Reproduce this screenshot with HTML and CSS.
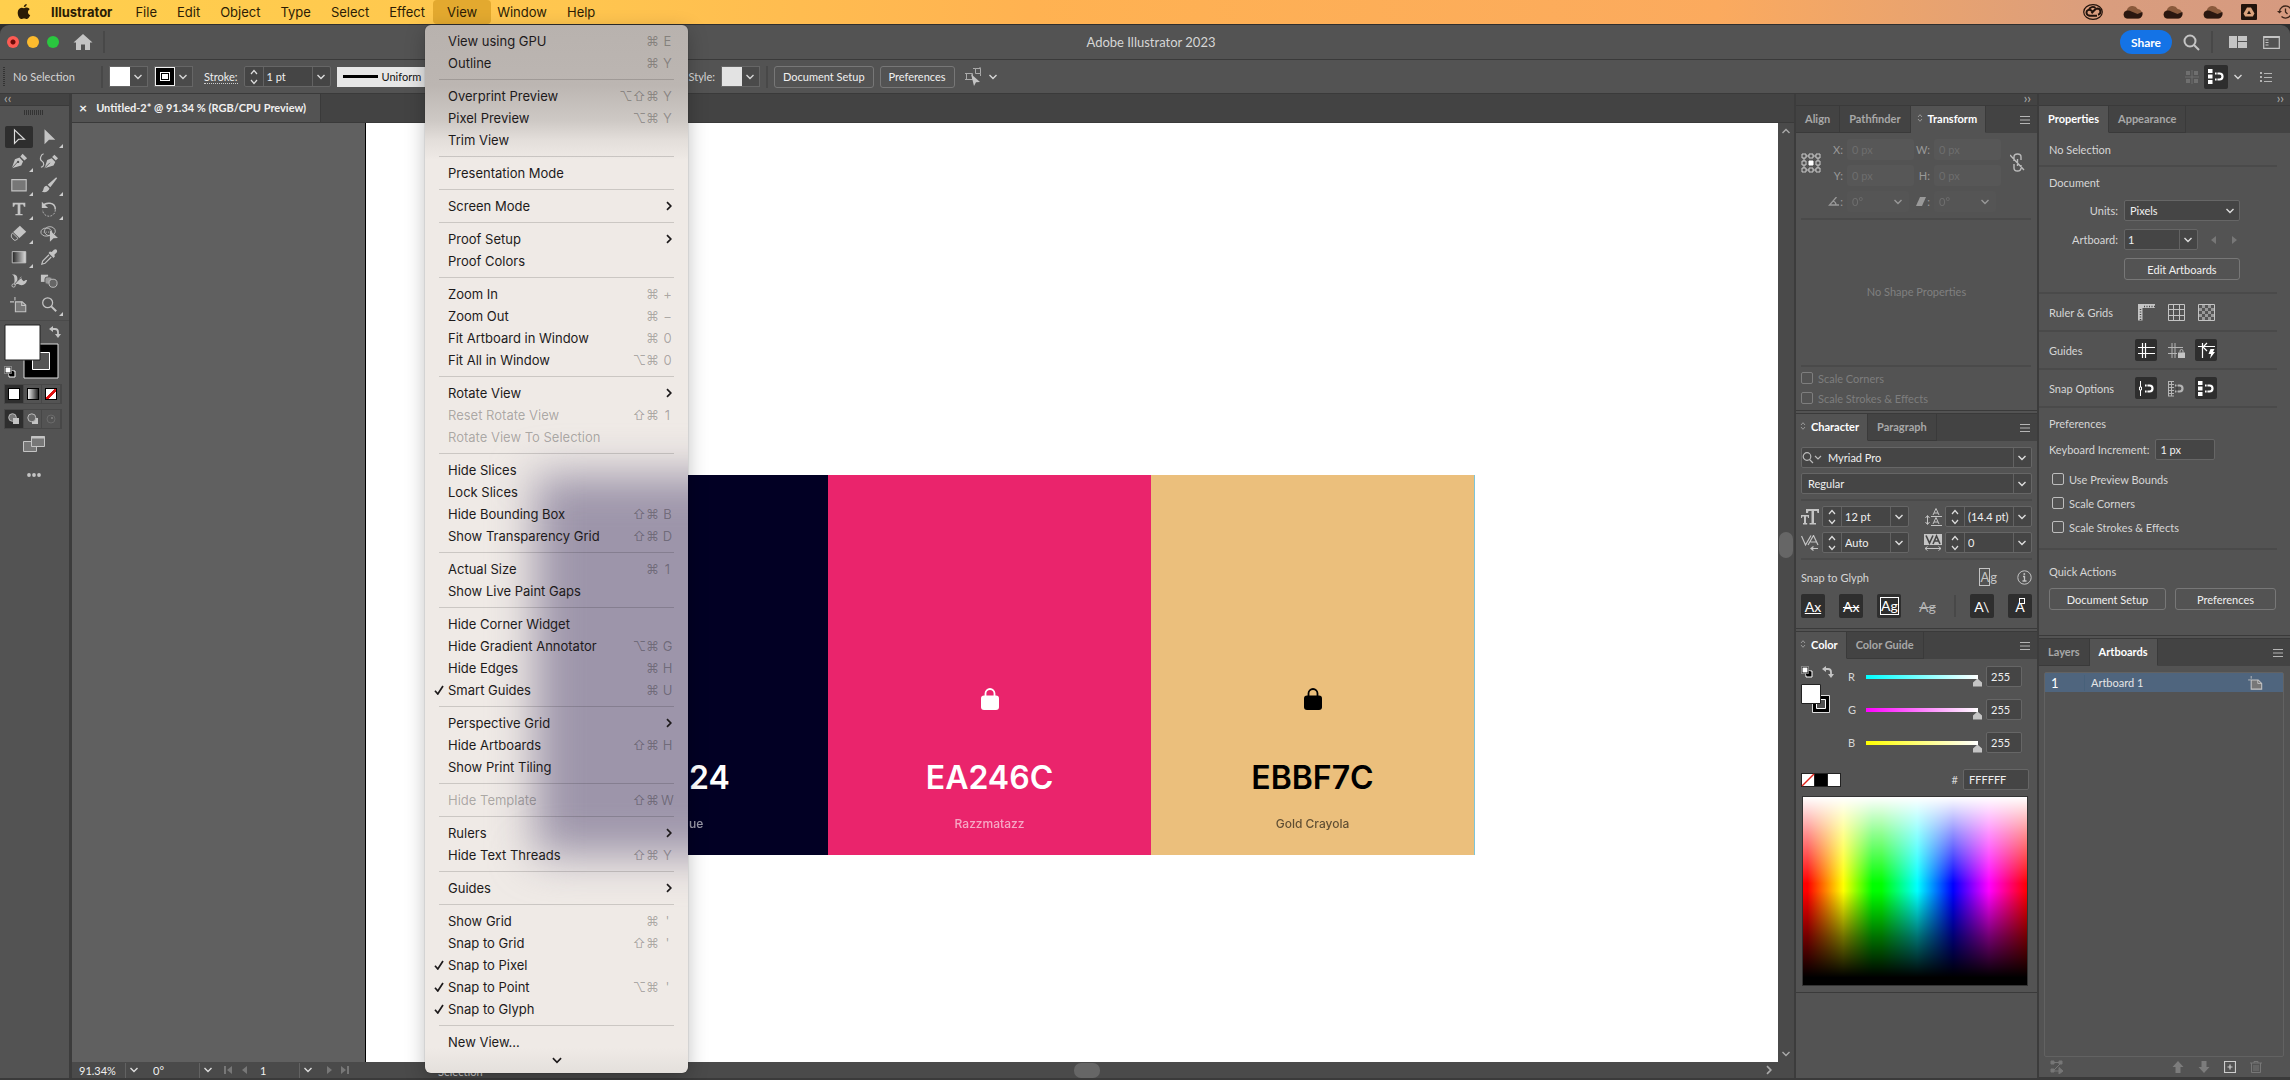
FILE: index.html
```html
<!DOCTYPE html>
<html lang="en">
<head>
    <meta charset="UTF-8">
    <meta name="viewport" content="width=device-width, initial-scale=1.0">
    <title>Adobe Illustrator 2023</title>
    <link rel="stylesheet" href="styles.css">
</head>
<body>
    <!-- Shared icons -->
    <svg class="sprite" aria-hidden="true">
        <symbol id="i-cloud" viewBox="0 0 20 14">
            <path d="M4.500 13.500a4 4 0 0 1-.8-7.900 6 6 0 0 1 11-1.600 4.800 4.800 0 0 1 .3 9.500z" fill="#8a5a3c"/>
            <path d="M4.500 13.500a4 4 0 0 1-1-7.800c2-.6 3.500 0 5 .8l6 2.500 4.800-2c1 3-.8 6.500-4.300 6.500z" fill="#2a1710"/>
        </symbol>
        <symbol id="i-menu" viewBox="0 0 10 8"><path d="M0 .5h10M0 4h10M0 7.500h10" stroke="#b5b5b5"/></symbol>
        <symbol id="i-sort" viewBox="0 0 6 8"><path d="M1 3l2-2.300L5 3M1 5l2 2.300L5 5" fill="none" stroke="#999"/></symbol>
        <symbol id="i-steps" viewBox="0 0 8 16"><path d="M1 5l3-3.500L7 5M1 11l3 3.500L7 11" fill="none" stroke="#ddd" stroke-width="1.200"/></symbol>
        <symbol id="i-down" viewBox="0 0 10 6"><path d="M1.500 1L5 4.500 8.500 1" fill="none" stroke="currentColor" stroke-width="1.400"/></symbol>
        <symbol id="i-check" viewBox="0 0 10 10"><path d="M1 5.800L3.800 9 9 1" fill="none" stroke="currentColor" stroke-width="1.700"/></symbol>
        <symbol id="i-right" viewBox="0 0 6 10"><path d="M1 1.200L4.800 5 1 8.800" fill="none" stroke="currentColor" stroke-width="1.700"/></symbol>
        <symbol id="i-swap" viewBox="0 0 12 12"><path d="M3.500 3h2.500q3 0 3 3v2.500" fill="none" stroke="#c4c4c4" stroke-width="1.800"/><path d="M4 0v6L0 3zM6 8h6l-3 4z" fill="#c4c4c4"/></symbol>
        <symbol id="i-default" viewBox="0 0 12 12"><path d="M5 5h6v6H5z" stroke="#fff" fill="#000"/><path d="M5 5h4.500v4.500H5z" fill="#000"/><path d="M1 1h6v6H1z" fill="#fff" stroke="#111"/><path d="M.5.5h7v7h-7z" fill="none" stroke="#bbb" stroke-width=".6"/></symbol>
        <symbol id="i-magnet" viewBox="0 0 17 17"><path d="M8 5.500h4.500a3 3 0 0 1 0 6H8" fill="none" stroke="currentColor" stroke-width="2.200"/><path d="M10 4v9" stroke="#2e2e2e" stroke-width=".8"/></symbol>
        <symbol id="i-tiles" viewBox="0 0 6 17"><path d="M0 1h4.500v4H0zM0 6.500h4.500v4H0zM0 12h4.500v4H0z" fill="currentColor"/></symbol>
        <symbol id="i-lock" viewBox="0 0 18 22"><path d="M4.500 9V5.500a4.500 4.500 0 0 1 9 0V9" fill="none" stroke="currentColor" stroke-width="1.800"/><rect y="7.500" width="18" height="14.500" rx="3" fill="currentColor"/></symbol>
        <symbol id="i-page" viewBox="0 0 18 16"><path d="M3.500 4.500h8l4 4v6.500h-12z" fill="#777" stroke="#c4c4c4" stroke-width="1.200"/><path d="M11 4.500v4h4.500M0 4.500h3M3.500 0v3" fill="none" stroke="#c4c4c4"/></symbol>
    </svg>

    <header class="menubar">
        <svg class="apple" viewBox="0 0 14 17"><path d="M9.900 0c.1 1.800-1.400 3.400-3.100 3.300C6.600 1.700 8.200.2 9.900 0zM7 4.500c.8 0 1.700-.8 3.100-.7 1.200.1 2.300.7 2.900 1.700-2.700 1.600-2.200 5.200.6 6.300-.6 1.600-1.900 4.200-3.500 4.200-1.200 0-1.600-.7-3-.7s-1.900.7-3 .7C2.200 16 .3 12.500.3 9.400c0-3.200 2-5.200 4-5.300C5.500 4 6.400 4.500 7 4.500z"/></svg>
        <nav class="app-menus">
            <button class="app-name">Illustrator</button>
            <button>File</button>
            <button>Edit</button>
            <button>Object</button>
            <button>Type</button>
            <button>Select</button>
            <button>Effect</button>
            <button class="open" aria-haspopup="menu">View</button>
            <button>Window</button>
            <button>Help</button>
        </nav>
        <div class="tray">
            <svg width="20" height="16" viewBox="0 0 20 16" fill="none" stroke="#21130c"><ellipse cx="10" cy="8" rx="9.300" ry="7.300" stroke-width="1.200"/><path d="M15 10.800a3.200 3.200 0 0 0-.5-6.300c-1.600 0-2.300.9-3.200 1.800L8.500 9.200M5.500 11.800h8.500M9.500 7.500L8 6.300C6 5 3.500 6.200 3.500 8.500s2 3.300 3.500 3" stroke-width="2"/><path d="M6 5.500a4 4 0 0 1 6.500-1.500" stroke-width="1.800"/></svg>
            <svg width="20" height="14"><use href="#i-cloud"/></svg>
            <svg width="20" height="14"><use href="#i-cloud"/></svg>
            <svg width="20" height="14"><use href="#i-cloud"/></svg>
            <svg class="tray-drive" width="16" height="16" viewBox="0 0 16 16"><rect width="16" height="16" rx="1" fill="#21130c"/><path d="M6 3.500h4l3.500 6-1.700 3H4.200l-1.700-3z" fill="#dba27c"/><path d="M8 6.500L10 10H6z" fill="#21130c"/></svg>
            <svg class="tray-clock" width="16" height="14" viewBox="0 0 16 14" fill="none" stroke="#3b2418" stroke-width="1.300"><path d="M2.500 7a6 6 0 1 1 2 4.500M8.500 3.500V7l2 2"/><path d="M0 6l2.500 2.500L5 6z" fill="#3b2418" stroke="none"/></svg>
        </div>
    </header>

    <div class="window">
        <div class="titlebar">
            <div class="title-left">
                <span class="light red"></span>
                <span class="light yellow"></span>
                <span class="light green"></span>
                <svg class="home" width="20" height="16" viewBox="0 0 20 16"><path d="M10 0l9.500 8.500H17V16h-5v-5.500H8V16H3V8.500H.5z" fill="#c4c4c4"/></svg>
                <span class="bar"></span>
            </div>
            <h1>Adobe Illustrator 2023</h1>
            <div class="title-right">
                <button class="share">Share</button>
                <svg width="17" height="17" viewBox="0 0 17 17" fill="none" stroke="#c4c4c4" stroke-width="2"><circle cx="7" cy="7" r="5.500"/><path d="M11 11l5 5"/></svg>
                <span class="bar"></span>
                <svg width="18" height="12" viewBox="0 0 18 12" fill="#c4c4c4"><path d="M0 0h8v12H0zM9 0h9v5H9zM9 6h9v6H9z"/></svg>
                <svg width="17" height="13" viewBox="0 0 17 13" fill="none" stroke="#c4c4c4"><path d="M.7.7h15.600v11.600H.7z" stroke-width="1.200"/><path d="M.5 1.500h16M2.500 4h3M2.500 6.500h3M2.500 9h3" /></svg>
            </div>
        </div>

        <div class="controlbar">
            <span class="grip"></span>
            <span class="selection-state">No Selection</span>
            <span class="bar"></span>
            <button class="chip" aria-label="Fill"><span class="chip-fill white"></span><svg width="10" height="6"><use href="#i-down"/></svg></button>
            <button class="chip" aria-label="Stroke color"><span class="chip-fill ring"></span><svg width="10" height="6"><use href="#i-down"/></svg></button>
            <label class="dotted" for="stroke">Stroke:</label>
            <span class="stepper stroke-stepper">
                <svg width="8" height="16"><use href="#i-steps"/></svg>
                <select id="stroke"><option>1 pt</option></select>
            </span>
            <button class="profile"><span class="line"></span>Uniform</button>
            <div class="style-group">
                <span>Style:</span>
                <button class="chip" aria-label="Graphic style"><span class="chip-fill light-gray"></span><svg width="10" height="6"><use href="#i-down"/></svg></button>
                <span class="bar"></span>
                <button class="btn">Document Setup</button>
                <button class="btn">Preferences</button>
                <svg width="17" height="20" viewBox="0 0 17 20" fill="none" stroke="#aaa"><path d="M1.500 6.500h6v6h-6zM10.500 1.500h5v5h-5zM0 6.500h2M0 12.500h2M15 0v2M8 1.500h2.500M15.500 6.500V9"/><path d="M6 7l9 8-4 .3L9 19z" fill="#c4c4c4" stroke="none"/></svg>
                <svg width="10" height="6"><use href="#i-down"/></svg>
            </div>
            <div class="control-right">
                <svg width="14" height="14" viewBox="0 0 14 14" fill="#6f6f6f"><path d="M1 1h4v4H1zM9 1h4v4H9zM1 9h4v4H1zM9 9h4v4H9zM0 6.500h14v1H0zM6.500 0h1v14h-1z"/></svg>
                <button class="tile on" aria-label="Snap to pixel"><svg width="6" height="17"><use href="#i-tiles"/></svg><svg class="mag" width="17" height="17"><use href="#i-magnet"/></svg></button>
                <svg width="10" height="6"><use href="#i-down"/></svg>
                <svg class="list-icon" width="12" height="10" viewBox="0 0 12 10" stroke="#b5b5b5"><path d="M0 1h2M0 5h2M0 9h2" stroke-width="2"/><path d="M4 1.500h8M4 5.500h8M4 9.500h8"/></svg>
            </div>
        </div>

        <div class="workspace">
            <!-- Tools -->
            <aside class="tools">
                <div class="strip">‹‹</div>
                <span class="tools-grip"></span>
                <div class="tool-grid">
                    <button class="tool on" aria-label="Selection"><svg viewBox="0 0 20 20"><path d="M5 2l11 10.500H9.500L5 17z" fill="none" stroke="#ddd" stroke-width="1.300"/></svg></button>
                    <button class="tool more" aria-label="Direct Selection"><svg viewBox="0 0 20 20"><path d="M5 1.500L17 13h-7l-5 5z"/></svg></button>
                    <button class="tool more" aria-label="Pen"><svg viewBox="0 0 20 20"><path d="M2 18l3.500-10 5-2 4 4.500-2 4.500zM11.500 5l2.500-3 5 5-3 2.500z"/><path d="M2 18l6.500-7" stroke="#535353"/><circle cx="9" cy="11" r="1.300" fill="#535353"/></svg></button>
                    <button class="tool" aria-label="Curvature"><svg viewBox="0 0 20 20"><path d="M5 18l3-9 5-2 4 4-2 4zM13.500 5.500L16 3l4 4-2.500 2.500z"/><path d="M5 18l6-6" stroke="#535353"/><path d="M1 17c4-1 4-5 1-7S1 3 4 2" fill="none" stroke="#c4c4c4" stroke-width="1.300"/></svg></button>
                    <button class="tool more" aria-label="Rectangle"><svg viewBox="0 0 20 20"><path d="M2 4h16v12.500H2z" fill="#777" stroke="#c4c4c4" stroke-width="1.200"/></svg></button>
                    <button class="tool more" aria-label="Paintbrush"><svg viewBox="0 0 20 20"><path d="M18 1.500l1 1-7.500 10-3-2.800zM7.500 10.800l3 2.800c-.5 3-4 5.500-8.500 4 2-1 1.500-2.500 2.300-4.500.6-1.500 1.800-2.200 3.200-2.300z"/></svg></button>
                    <button class="tool more" aria-label="Type"><svg viewBox="0 0 20 20"><path d="M3 3h14v4.500h-1.500L14.500 5h-3v10.500h2.500V17H6v-1.500h2.500V5h-3l-1 2.500H3z"/></svg></button>
                    <button class="tool more" aria-label="Rotate"><svg viewBox="0 0 20 20"><path d="M3 7C6 2 17 2 17 10.500" fill="none" stroke="#c4c4c4" stroke-width="1.600"/><path d="M17 11a7 7 0 0 1-14 0" fill="none" stroke="#c4c4c4" stroke-dasharray="2 1.500"/><path d="M2 2v7h7z"/></svg></button>
                    <button class="tool more" aria-label="Eraser"><svg viewBox="0 0 20 20"><path d="M11 2l7 6.500-7.500 7L3.500 9z"/><path d="M2.800 10L9 16l-2.500 2H4.500L1.500 14.500V12z" fill="none" stroke="#c4c4c4"/></svg></button>
                    <button class="tool" aria-label="Shape Builder"><svg viewBox="0 0 20 20"><g fill="none" stroke="#c4c4c4"><ellipse cx="7" cy="9" rx="6" ry="4.500"/><ellipse cx="11" cy="8" rx="6" ry="5"/><path d="M4 9h8" stroke-dasharray="1 1.500"/></g><path d="M11 7l9 8.500-5 .2-4 4z"/></svg></button>
                    <button class="tool more" aria-label="Gradient"><svg viewBox="0 0 20 20"><defs><linearGradient id="g1"><stop stop-color="#222"/><stop offset="1" stop-color="#ddd"/></linearGradient></defs><path d="M2.500 4h15v12.500h-15z" fill="url(#g1)" stroke="#c4c4c4"/></svg></button>
                    <button class="tool" aria-label="Eyedropper"><svg viewBox="0 0 20 20"><path d="M11 4l2 .5L15.500 2q2-1.500 3 0t0 3L16 7.500l.5 2L15 11l-5.500-5.500z"/><path d="M10 7.500L3 14.500 2 18l3.500-1 7-7" fill="none" stroke="#c4c4c4" stroke-width="1.300"/></svg></button>
                    <button class="tool" aria-label="Puppet Warp"><svg viewBox="0 0 20 20"><path d="M1 16c3 0 4-3 4-7S4 3 2 3c5-1 7 2 6 7 3-1 2-4 5-5-1 3 1 4 2 5s1-2 4-1c-1 5-5 7-9 5-3-2-4 2-9 2z"/><path d="M3 16L10 8l5-3" stroke="#535353" fill="none"/><circle cx="4" cy="15" r="1.800" fill="#535353" stroke="#c4c4c4"/></svg></button>
                    <button class="tool" aria-label="Blend"><svg viewBox="0 0 20 20"><path d="M1 3h8v8H1z"/><rect x="5.500" y="5.500" width="8" height="8" rx="2.500" fill="#999" stroke="#535353"/><circle cx="14.500" cy="12.500" r="4.500" fill="#666" stroke="#c4c4c4"/></svg></button>
                    <button class="tool" aria-label="Artboard"><svg viewBox="0 0 20 20"><path d="M6 6.500h7.500L17.500 10v7.500H6z" fill="#777" stroke="#c4c4c4" stroke-width="1.200"/><path d="M13 6.500v4h4.500M0 6.500h4.500M5.500 1v4" fill="none" stroke="#c4c4c4" stroke-width="1.200"/></svg></button>
                    <button class="tool more" aria-label="Zoom"><svg viewBox="0 0 20 20"><circle cx="8.500" cy="7.500" r="5.500" fill="none" stroke="#c4c4c4" stroke-width="1.400"/><path d="M12.500 11.500l5.500 5.500" stroke="#c4c4c4" stroke-width="2.200"/></svg></button>
                </div>
                <svg class="fill-stroke" width="60" height="56" viewBox="0 0 60 56">
                    <path d="M20 20h34v34H20z" fill="#000" stroke="#ddd"/><path d="M28.500 28.500h17v17h-17z" fill="#535353" stroke="#fff"/>
                    <path d="M1 1h35v35H1z" fill="#fff" stroke="#222"/>
                    <svg x="45" y="2" width="12" height="12"><use href="#i-swap"/></svg>
                    <svg x="0" y="42" width="12" height="12"><use href="#i-default"/></svg>
                </svg>
                <div class="mode-row">
                    <button class="on" aria-label="Color"><i class="dot-white"></i></button>
                    <button aria-label="Gradient"><i class="dot-grad"></i></button>
                    <button aria-label="None"><i class="dot-none"></i></button>
                </div>
                <div class="mode-row">
                    <button class="on" aria-label="Draw Normal"><svg width="12" height="12" viewBox="0 0 12 12"><circle cx="4.500" cy="4.500" r="3.800" fill="#777" stroke="#bbb"/><path d="M5 5h6v6H5z" fill="#c4c4c4"/></svg></button>
                    <button aria-label="Draw Behind"><svg width="12" height="12" viewBox="0 0 12 12"><path d="M5 5h6v6H5z" fill="#c4c4c4"/><circle cx="4.800" cy="4.800" r="4" fill="#666" stroke="#bbb"/></svg></button>
                    <button aria-label="Draw Inside"><svg width="12" height="12" viewBox="0 0 12 12"><circle cx="6" cy="6" r="4" fill="none" stroke="#6a6a6a"/><path d="M6 4h2v2H6z" fill="#777"/></svg></button>
                </div>
                <svg class="screen-mode" width="22" height="17" viewBox="0 0 22 17" fill="#777" stroke="#c4c4c4"><path d="M.5 5.500h13v10H.5z"/><path d="M8.500.5h13v10h-13z"/><path d="M8.500 1.500h13" stroke-width="2"/></svg>
                <svg class="dots" width="14" height="4" viewBox="0 0 14 4" fill="#c4c4c4"><circle cx="2" cy="2" r="1.900"/><circle cx="7" cy="2" r="1.900"/><circle cx="12" cy="2" r="1.900"/></svg>
            </aside>

            <!-- Document -->
            <main class="document">
                <div class="doc-tabs">
                    <div class="doc-tab"><button aria-label="Close tab">×</button>Untitled-2* @ 91.34 % (RGB/CPU Preview)</div>
                </div>
                <div class="canvas-row">
                    <div class="canvas">
                        <div class="artboard">
                            <div class="palette">
                                <div class="color-card navy">
                                    <strong>24</strong>
                                    <span>ue</span>
                                </div>
                                <div class="color-card pink">
                                    <svg width="18" height="22"><use href="#i-lock"/></svg>
                                    <strong>EA246C</strong>
                                    <span>Razzmatazz</span>
                                </div>
                                <div class="color-card gold">
                                    <svg width="18" height="22"><use href="#i-lock"/></svg>
                                    <strong>EBBF7C</strong>
                                    <span>Gold Crayola</span>
                                </div>
                            </div>
                        </div>
                    </div>
                    <div class="vscroll">
                        <svg class="flip" width="10" height="6"><use href="#i-down"/></svg>
                        <span class="thumb"></span>
                        <svg width="10" height="6"><use href="#i-down"/></svg>
                    </div>
                </div>
                <div class="statusbar">
                    <select class="status-select" aria-label="Zoom level"><option>91.34%</option></select>
                    <select class="status-select" aria-label="Rotation"><option>0°</option></select>
                    <svg class="nav-icons" width="24" height="10" viewBox="0 0 24 10" fill="#777"><path d="M0 1h2v8H0zM8 1v8L3 5zM23 1v8l-5-4z"/></svg>
                    <select class="status-select artboard-no" aria-label="Artboard number"><option>1</option></select>
                    <svg class="nav-icons" width="24" height="10" viewBox="0 0 24 10" fill="#777"><path d="M1 1v8l5-4zM15 1v8l5-4zM21 1h2v8h-2z"/></svg>
                    <span class="status-tool">Selection</span>
                    <div class="hscroll">
                        <span class="hthumb"></span>
                        <svg width="6" height="10" class="arrow"><use href="#i-right"/></svg>
                    </div>
                </div>
            </main>

            <!-- Middle dock -->
            <aside class="dock dock-a">
                <div class="strip end">››</div>
                <section class="panel transform">
                    <div class="tabs">
                        <button>Align</button>
                        <button>Pathfinder</button>
                        <button class="active"><svg width="6" height="8"><use href="#i-sort"/></svg>Transform</button>
                        <svg class="panel-menu" width="10" height="8"><use href="#i-menu"/></svg>
                    </div>
                    <div class="transform-fields">
                        <svg class="ref-point" width="20" height="20" viewBox="0 0 20 20" fill="none" stroke="#ccc"><path d="M1 1h4v4H1zM8 1h4v4H8zM15 1h4v4h-4zM1 8h4v4H1zM15 8h4v4h-4zM1 15h4v4H1zM8 15h4v4H8zM15 15h4v4h-4zM5 3h3M12 3h3M5 17h3M12 17h3M3 5v3M3 12v3M17 5v3M17 12v3"/><path d="M8 8h4v4H8z" fill="#fff" stroke="#fff"/></svg>
                        <div class="xywh">
                            <label for="x">X:</label><input id="x" value="0 px" disabled>
                            <label for="w">W:</label><input id="w" value="0 px" disabled>
                            <label for="y">Y:</label><input id="y" value="0 px" disabled>
                            <label for="h">H:</label><input id="h" value="0 px" disabled>
                            <label for="angle" aria-label="Rotate"><svg width="11" height="9" viewBox="0 0 11 9" fill="none" stroke="#999" stroke-width="1.300"><path d="M8.500 0L1.500 8H11M5 4q3 1 3 4"/></svg>:</label><select id="angle" disabled><option>0°</option></select>
                            <label for="shear" aria-label="Shear"><svg width="10" height="9" viewBox="0 0 10 9"><path d="M4 0h6L6 9H0z" fill="#999"/></svg>:</label><select id="shear" disabled><option>0°</option></select>
                        </div>
                        <svg class="unlink" width="15" height="19" viewBox="0 0 15 19" fill="none" stroke="#bbb" stroke-width="1.400"><path d="M4 8V4q0-3 3.500-3T11 4v3M4 11v4q0 3 3.500 3T11 15v-3M7.500 6v7M0 2l14 15"/></svg>
                    </div>
                    <p class="empty">No Shape Properties</p>
                    <div class="scale-opts">
                        <label class="dim"><input type="checkbox" disabled>Scale Corners</label>
                        <label class="dim"><input type="checkbox" disabled>Scale Strokes &amp; Effects</label>
                    </div>
                </section>

                <section class="panel character">
                    <div class="tabs">
                        <button class="active first"><svg width="6" height="8"><use href="#i-sort"/></svg>Character</button>
                        <button>Paragraph</button>
                        <svg class="panel-menu" width="10" height="8"><use href="#i-menu"/></svg>
                    </div>
                    <div class="character-body">
                        <div class="font-family">
                            <svg width="20" height="12" viewBox="0 0 20 12" fill="none" stroke="#bbb" stroke-width="1.200"><circle cx="5" cy="4.500" r="3.800"/><path d="M7.500 7.500l3.500 3.500M13 4l3 3 3-3"/></svg>
                            <select class="combo" aria-label="Font family"><option>Myriad Pro</option></select>
                        </div>
                        <select class="combo" aria-label="Font style"><option>Regular</option></select>
                        <hr>
                        <div class="metrics">
                            <svg class="m-icon" width="18" height="16" viewBox="0 0 18 16" fill="#c4c4c4"><path d="M5 0h13v4h-1.500l-.5-2h-3v12h2v1.500H8.500V14h2V2h-3L7 4H5zM0 6h8v3H7l-.3-1.500H5V14h1.200v1.500H2V14h1V7.500H1.300L1 9H0z"/></svg>
                            <span class="stepper"><svg width="8" height="16"><use href="#i-steps"/></svg><select aria-label="Font size"><option>12 pt</option></select></span>
                            <svg class="m-icon" width="17" height="18" viewBox="0 0 17 18" fill="none" stroke="#c4c4c4"><path d="M8 7l3-6.500L14 7M9 5h4M6 8.500h11M8 16l3-6.500 3 6.500M9 14h4M6 17.500h11M2.500 8v8M.5 10l2-2.500 2 2.500M.5 14l2 2.500 2-2.500"/></svg>
                            <span class="stepper"><svg width="8" height="16"><use href="#i-steps"/></svg><select aria-label="Leading"><option>(14.4 pt)</option></select></span>
                            <svg class="m-icon" width="18" height="16" viewBox="0 0 18 16" fill="none" stroke="#c4c4c4" stroke-width="1.200"><path d="M.5 1l4 9L10 .5M7 10L12.500 .5 17 10M9.500 7h6M17 13.500h-7M12.500 11.500l-2.500 2 2.500 2"/></svg>
                            <span class="stepper"><svg width="8" height="16"><use href="#i-steps"/></svg><select aria-label="Kerning"><option>Auto</option></select></span>
                            <svg class="m-icon" width="18" height="17" viewBox="0 0 18 17" fill="none"><path d="M0 0h18v11H0z" fill="#c4c4c4"/><path d="M2 1.500L5.500 9 9 1.500M9 10l3.500-8L16 10M10.500 7h4" stroke="#444" stroke-width="1.600"/><path d="M1 14.500h16M3.500 12.500l-2.500 2 2.500 2M14.500 12.500l2.500 2-2.500 2" stroke="#c4c4c4"/></svg>
                            <span class="stepper"><svg width="8" height="16"><use href="#i-steps"/></svg><select aria-label="Tracking"><option>0</option></select></span>
                        </div>
                        <hr>
                        <div class="glyph-head">
                            <span>Snap to Glyph</span>
                            <span class="ag-mini"><b>A</b>g</span>
                            <svg width="15" height="15" viewBox="0 0 15 15" fill="none" stroke="#c4c4c4"><circle cx="7.500" cy="7.500" r="6.700"/><path d="M6 6.500h1.500v4.500M5.500 11h4" stroke-width="1.300"/><circle cx="7.300" cy="4" r=".6" fill="#c4c4c4"/></svg>
                        </div>
                        <div class="glyph-row">
                            <button class="tile on base">Ax</button>
                            <button class="tile on strike">Ax</button>
                            <button class="tile on boxed"><b>Ag</b></button>
                            <button class="tile off strike">Ag</button>
                            <span class="bar"></span>
                            <button class="tile on angle">A\</button>
                            <button class="tile on anchor">A</button>
                        </div>
                    </div>
                </section>

                <section class="panel color">
                    <div class="tabs">
                        <button class="active first"><svg width="6" height="8"><use href="#i-sort"/></svg>Color</button>
                        <button>Color Guide</button>
                        <svg class="panel-menu" width="10" height="8"><use href="#i-menu"/></svg>
                    </div>
                    <div class="color-body">
                        <svg class="mini-swatches" width="34" height="50" viewBox="0 0 34 50">
                            <svg width="12" height="12"><use href="#i-default"/></svg>
                            <svg x="21" width="12" height="12"><use href="#i-swap"/></svg>
                            <path d="M11.500 29.500h17v17h-17z" fill="#000" stroke="#ddd"/><path d="M15.500 33.500h9v9h-9z" fill="#535353" stroke="#fff"/>
                            <path d="M.5 18.500h19v19H.5z" fill="#fff" stroke="#222"/>
                        </svg>
                        <div class="sliders">
                            <label for="r">R</label><input class="slide cyan" type="range" min="0" max="255" value="255" aria-label="Red"><input id="r" value="255">
                            <label for="g">G</label><input class="slide magenta" type="range" min="0" max="255" value="255" aria-label="Green"><input id="g" value="255">
                            <label for="b">B</label><input class="slide yel" type="range" min="0" max="255" value="255" aria-label="Blue"><input id="b" value="255">
                        </div>
                    </div>
                    <div class="hex-row">
                        <svg width="40" height="14" viewBox="0 0 40 14"><path d="M0 0h40v14H0z" fill="#222"/><path d="M1 1h12v12H1z" fill="#fff"/><path d="M1 13L13 1" stroke="#e2231a" stroke-width="1.500"/><path d="M14 1h12v12H14z"/><path d="M27 1h12v12H27z" fill="#fff"/></svg>
                        <label for="hex">#</label>
                        <input id="hex" value="FFFFFF">
                    </div>
                    <div class="spectrum"></div>
                </section>
            </aside>

            <!-- Right dock -->
            <aside class="dock dock-b">
                <div class="strip end">››</div>
                <section class="panel properties">
                    <div class="tabs">
                        <button class="active">Properties</button>
                        <button>Appearance</button>
                    </div>
                    <div class="prop-body">
                        <p class="sel">No Selection</p>
                        <hr>
                        <h2>Document</h2>
                        <div class="doc-fields">
                            <label for="units">Units:</label><select id="units"><option>Pixels</option></select>
                            <label for="ab">Artboard:</label>
                            <span class="ab-pick"><select id="ab" class="combo"><option>1</option></select><svg width="26" height="8" viewBox="0 0 26 8" fill="#777"><path d="M5 0v8L0 4zM21 0v8l5-4z"/></svg></span>
                            <button class="btn">Edit Artboards</button>
                        </div>
                        <hr>
                        <div class="icon-row">
                            <span>Ruler &amp; Grids</span>
                            <button class="tile" aria-label="Rulers"><svg width="17" height="17" viewBox="0 0 17 17"><path d="M0 0h17v4H4.500v12.500H0z" fill="#c4c4c4"/><path d="M6 2.500h11M2.500 5v11" stroke="#444" stroke-width="1.500" stroke-dasharray="1 1.500"/></svg></button>
                            <button class="tile" aria-label="Grid"><svg width="17" height="17" viewBox="0 0 17 17" fill="none" stroke="#c4c4c4"><path d="M.5.500h16v16H.5zM5.500 0v17M11.500 0v17M0 5.500h17M0 11.500h17"/></svg></button>
                            <button class="tile" aria-label="Transparency grid"><svg width="17" height="17" viewBox="0 0 17 17"><path d="M.5.500h16v16H.5z" fill="#555" stroke="#c4c4c4"/><path d="M4 1h3v3H4zM10 1h3v3h-3zM1 4h3v3H1zM7 4h3v3H7zM13 4h3v3h-3zM4 7h3v3H4zM10 7h3v3h-3zM1 10h3v3H1zM7 10h3v3H7zM13 10h3v3h-3zM4 13h3v3H4zM10 13h3v3h-3z" fill="#999"/></svg></button>
                        </div>
                        <hr>
                        <div class="icon-row">
                            <span>Guides</span>
                            <button class="tile on" aria-label="Show guides"><svg width="17" height="17" viewBox="0 0 17 17" stroke="#fff" stroke-width="1.200"><path d="M4.500 1v15M7.500 1v15M0 5.500h17M0 11.500h17"/></svg></button>
                            <button class="tile" aria-label="Lock guides"><svg width="17" height="17" viewBox="0 0 17 17" fill="none" stroke="#b5b5b5"><path d="M4 1v15M7 1v15M0 5.500h15M0 11.500h9"/><path d="M10 10.500h7v5.500h-7z" fill="#c4c4c4" stroke="none"/><path d="M12 10.500V9q0-1.500 1.500-1.500T15 9v2"/></svg></button>
                            <button class="tile on" aria-label="Smart guides"><svg width="17" height="17" viewBox="0 0 17 17" fill="none" stroke="#fff" stroke-width="1.200"><path d="M4.500 1v15M0 4.500h17M9 1L5 5l4 4"/><path d="M12.500 7h4l-1.500 3h2l-5 6.500 1-4.500h-2.500z" fill="#fff" stroke="none"/></svg></button>
                        </div>
                        <hr>
                        <div class="icon-row">
                            <span>Snap Options</span>
                            <button class="tile on" aria-label="Snap to point"><svg width="6" height="17" viewBox="0 0 6 17" fill="#2e2e2e" stroke="#fff"><path d="M2.500 1v15"/><path d="M1.500 7h2v3h-2z"/></svg><svg class="mag" width="17" height="17"><use href="#i-magnet"/></svg></button>
                            <button class="tile" aria-label="Snap to grid"><svg width="6" height="17" viewBox="0 0 6 17" fill="none" stroke="#b5b5b5"><path d="M.5 1v15M3.500 1v15M0 1.500h6M0 4.500h6M0 7.500h6M0 10.500h6M0 13.500h6M0 16h6"/></svg><svg class="mag" width="17" height="17"><use href="#i-magnet"/></svg></button>
                            <button class="tile on" aria-label="Snap to pixel"><svg width="6" height="17"><use href="#i-tiles"/></svg><svg class="mag" width="17" height="17"><use href="#i-magnet"/></svg></button>
                        </div>
                        <hr>
                        <h2>Preferences</h2>
                        <div class="kbd-inc"><label for="inc">Keyboard Increment:</label><input id="inc" value="1 px"></div>
                        <div class="checks">
                            <label><input type="checkbox">Use Preview Bounds</label>
                            <label><input type="checkbox">Scale Corners</label>
                            <label><input type="checkbox">Scale Strokes &amp; Effects</label>
                        </div>
                        <hr>
                        <h2 class="quick">Quick Actions</h2>
                        <div class="quick-actions">
                            <button class="btn">Document Setup</button>
                            <button class="btn">Preferences</button>
                        </div>
                    </div>
                </section>

                <section class="panel artboards">
                    <div class="tabs">
                        <button>Layers</button>
                        <button class="active">Artboards</button>
                        <svg class="panel-menu" width="10" height="8"><use href="#i-menu"/></svg>
                    </div>
                    <ul class="artboard-list">
                        <li><span class="num">1</span><span class="name">Artboard 1</span><svg width="16" height="14"><use href="#i-page"/></svg></li>
                    </ul>
                    <div class="artboard-tools">
                        <svg class="rearrange" width="14" height="14" viewBox="0 0 14 14" fill="#777" stroke="#777"><path d="M1 1h3v3H1zM9 1h3v3H9zM1 9h3v3H1z"/><path d="M4 2.500h5M10 4L4 10M4 11h5"/><path d="M9 7.500l4 3.500-4 3z"/></svg>
                        <svg width="12" height="12" viewBox="0 0 12 12" fill="#7c7c7c"><path d="M6 0l5.500 6H8.500v6h-5V6H.5z"/></svg>
                        <svg width="12" height="12" viewBox="0 0 12 12" fill="#7c7c7c"><path d="M6 12l5.500-6H8.500V0h-5v6H.5z"/></svg>
                        <svg width="12" height="12" viewBox="0 0 12 12" fill="none" stroke="#ccc"><path d="M.5.500h11v11H.5zM6 3.500v5M3.500 6h5" stroke-width="1.200"/></svg>
                        <svg width="12" height="12" viewBox="0 0 12 12" fill="none" stroke="#777"><path d="M0 2h12M4 2V.5h4V2M1.500 2v9.500h9V2M4 4v6M6 4v6M8 4v6"/></svg>
                    </div>
                </section>
            </aside>
        </div>
    </div>

    <!-- View menu -->
    <div class="view-menu" role="menu">
        <ul>
            <li><button>View using GPU</button><kbd>⌘<i>E</i></kbd></li>
            <li><button>Outline</button><kbd>⌘<i>Y</i></kbd></li>
        </ul>
        <ul>
            <li><button>Overprint Preview</button><kbd>⌥⇧⌘<i>Y</i></kbd></li>
            <li><button>Pixel Preview</button><kbd>⌥⌘<i>Y</i></kbd></li>
            <li><button>Trim View</button></li>
        </ul>
        <ul>
            <li><button>Presentation Mode</button></li>
        </ul>
        <ul>
            <li><button>Screen Mode</button><svg class="sub" width="6" height="10"><use href="#i-right"/></svg></li>
        </ul>
        <ul>
            <li><button>Proof Setup</button><svg class="sub" width="6" height="10"><use href="#i-right"/></svg></li>
            <li><button>Proof Colors</button></li>
        </ul>
        <ul>
            <li><button>Zoom In</button><kbd>⌘<i>+</i></kbd></li>
            <li><button>Zoom Out</button><kbd>⌘<i>−</i></kbd></li>
            <li><button>Fit Artboard in Window</button><kbd>⌘<i>0</i></kbd></li>
            <li><button>Fit All in Window</button><kbd>⌥⌘<i>0</i></kbd></li>
        </ul>
        <ul>
            <li><button>Rotate View</button><svg class="sub" width="6" height="10"><use href="#i-right"/></svg></li>
            <li><button disabled>Reset Rotate View</button><kbd>⇧⌘<i>1</i></kbd></li>
            <li><button disabled>Rotate View To Selection</button></li>
        </ul>
        <ul>
            <li><button>Hide Slices</button></li>
            <li><button>Lock Slices</button></li>
            <li><button>Hide Bounding Box</button><kbd>⇧⌘<i>B</i></kbd></li>
            <li><button>Show Transparency Grid</button><kbd>⇧⌘<i>D</i></kbd></li>
        </ul>
        <ul>
            <li><button>Actual Size</button><kbd>⌘<i>1</i></kbd></li>
            <li><button>Show Live Paint Gaps</button></li>
        </ul>
        <ul>
            <li><button>Hide Corner Widget</button></li>
            <li><button>Hide Gradient Annotator</button><kbd>⌥⌘<i>G</i></kbd></li>
            <li><button>Hide Edges</button><kbd>⌘<i>H</i></kbd></li>
            <li><svg class="check" width="10" height="10"><use href="#i-check"/></svg><button>Smart Guides</button><kbd>⌘<i>U</i></kbd></li>
        </ul>
        <ul>
            <li><button>Perspective Grid</button><svg class="sub" width="6" height="10"><use href="#i-right"/></svg></li>
            <li><button>Hide Artboards</button><kbd>⇧⌘<i>H</i></kbd></li>
            <li><button>Show Print Tiling</button></li>
        </ul>
        <ul>
            <li><button disabled>Hide Template</button><kbd>⇧⌘<i>W</i></kbd></li>
        </ul>
        <ul>
            <li><button>Rulers</button><svg class="sub" width="6" height="10"><use href="#i-right"/></svg></li>
            <li><button>Hide Text Threads</button><kbd>⇧⌘<i>Y</i></kbd></li>
        </ul>
        <ul>
            <li><button>Guides</button><svg class="sub" width="6" height="10"><use href="#i-right"/></svg></li>
        </ul>
        <ul>
            <li><button>Show Grid</button><kbd>⌘<i>'</i></kbd></li>
            <li><button>Snap to Grid</button><kbd>⇧⌘<i>'</i></kbd></li>
            <li><svg class="check" width="10" height="10"><use href="#i-check"/></svg><button>Snap to Pixel</button></li>
            <li><svg class="check" width="10" height="10"><use href="#i-check"/></svg><button>Snap to Point</button><kbd>⌥⌘<i>'</i></kbd></li>
            <li><svg class="check" width="10" height="10"><use href="#i-check"/></svg><button>Snap to Glyph</button></li>
        </ul>
        <ul>
            <li><button>New View...</button></li>
        </ul>
        <div class="menu-more"><svg width="12" height="7" viewBox="0 0 10 6"><use href="#i-down"/></svg></div>
    </div>
</body>
</html>
```
FILE: styles.css
```css
* { box-sizing: border-box; }
body {
    margin: 0;
    height: 100vh;
    display: flex;
    flex-direction: column;
    overflow: hidden;
    background: #2f2f2f;
    color: #d6d6d6;
    font-family: Lato, "Liberation Sans", sans-serif;
    font-size: 11px;
}
button, input, select {
    font: inherit;
    color: inherit;
    background: none;
    border: 0;
    padding: 0;
    margin: 0;
}
h1, h2, p, ul { margin: 0; padding: 0; font-weight: 400; font-size: 11px; list-style: none; }
hr { border: 0; border-top: 2px solid #4a4a4a; margin: 0; width: 100%; }
svg { display: block; flex: none; }
.sprite { position: absolute; width: 0; height: 0; }

/* macOS menu bar */
.menubar {
    flex: none;
    height: 24px;
    display: flex;
    align-items: center;
    background: linear-gradient(90deg, #ffcf4d 0%, #ffc64f 25%, #ffb251 45%, #fbaa5e 75%, #d99d7e 92%, #d69a80 100%);
    color: #2b1c05;
    font-family: Inter, "Liberation Sans", sans-serif;
    font-size: 13px;
    overflow: hidden;
}
.apple { width: 14px; height: 16px; margin: 0 17px 0 17px; fill: #2b1c05; }
.app-menus { display: flex; height: 24px; margin-left: -7px; }
.app-menus button { padding: 0 10px; border-radius: 4px; }
.app-menus .app-name { font-weight: 700; padding-right: 13px; }
.app-menus .open { background: #e3a92f; padding: 0 14px; margin: 0 -4px 0 -2px; }
.tray { margin-left: auto; display: flex; align-items: center; gap: 20px; margin-right: -3px; }
.tray-drive { margin-left: -2px; }

/* Application window */
.window {
    flex: 1;
    min-height: 0;
    margin-top: 1px;
    display: flex;
    flex-direction: column;
    background: #535353;
    border-radius: 9px 9px 0 0;
    border-bottom: 2px solid #3a3a3a;
}
.bar { width: 2px; height: 22px; background: #484848; }
.titlebar {
    flex: none;
    height: 35px;
    display: grid;
    grid-template-columns: 1fr auto 1fr;
    align-items: center;
    border-bottom: 1px solid #3a3a3a;
}
.titlebar h1 { font-size: 13px; padding-left: 12px; }
.title-left { display: flex; align-items: center; gap: 8px; padding-left: 7px; }
.light { width: 12px; height: 12px; border-radius: 50%; }
.red { background: radial-gradient(circle, #6b0b08 2px, #fd5b53 3px); }
.yellow { background: #fdbb2e; }
.green { background: #2ac73f; }
.home { margin: 0 2px 0 6px; }
.title-right { display: flex; align-items: center; justify-content: flex-end; gap: 11px; padding-right: 10px; }
.share { width: 52px; height: 24px; border-radius: 12px; background: #1473e6; color: #fff; font-size: 12px; font-weight: 700; }
.title-right .bar + svg { margin: 0 5px 0 5px; }

/* Control bar */
.controlbar {
    flex: none;
    height: 34px;
    display: flex;
    align-items: center;
    padding: 0 18px 0 3px;
    border-bottom: 1px solid #3a3a3a;
}
.grip { width: 2px; height: 20px; background: repeating-linear-gradient(#333 0 1px, #535353 1px 2px); }
.selection-state { width: 88px; margin-left: 8px; }
.controlbar > .chip { margin-left: 6px; }
.chip {
    display: flex;
    align-items: center;
    width: 39px;
    height: 21px;
    padding-right: 4px;
    justify-content: space-between;
    border: 1px solid #666;
    background: #4a4a4a;
}
.chip-fill { width: 20px; height: 19px; }
.white { background: #fff; }
.light-gray { background: #e3e3e3; }
.ring { background: #000; border: 1px solid #eee; display: grid; place-items: center; }
.ring::after { content: ""; width: 8px; height: 7px; border: 1px solid #fff; background: #fff; box-shadow: inset 0 0 0 1px #000; }
.dotted { margin: 0 6px 0 11px; border-bottom: 1px dotted #ccc; color: #eee; }
.stepper { display: flex; align-items: center; height: 21px; border: 1px solid #666; background: #454545; border-radius: 2px; }
.stepper svg { width: 18px; height: 16px; }
.stepper select, .combo, .doc-fields #units, .status-select, .xywh select {
    appearance: none;
    flex: 1;
    min-width: 0;
    height: 100%;
    color: #f0f0f0;
    background:
        url("data:image/svg+xml,%3Csvg xmlns='http://www.w3.org/2000/svg' width='10' height='6'%3E%3Cpath d='M1.500 1L5 4.500 8.500 1' fill='none' stroke='%23ddd' stroke-width='1.400'/%3E%3C/svg%3E") no-repeat right 4px center,
        linear-gradient(#626262, #626262) no-repeat right 17px top / 1px 100%;
}
.stepper select { border-left: 1px solid #626262; padding-left: 3px; }
.stroke-stepper { width: 87px; }
.profile {
    display: flex;
    align-items: center;
    gap: 4px;
    width: 130px;
    height: 20px;
    margin-left: 6px;
    padding-left: 6px;
    background: #e6e6e6;
    color: #111;
}
.line { width: 35px; height: 3px; background: #000; }
.style-group { display: flex; align-items: center; gap: 6px; margin-left: 222px; }
.style-group > svg:first-of-type { margin-left: 4px; }
.btn { height: 22px; padding: 0 9px; border: 1px solid #777; border-radius: 3px; color: #f0f0f0; }
.style-group .btn { padding: 0 8px; }
.control-right { margin-left: auto; display: flex; align-items: center; gap: 5px; }
.list-icon { margin-left: 12px; }
.tile { position: relative; display: flex; align-items: center; justify-content: center; width: 22px; height: 22px; border-radius: 2px; color: #b5b5b5; }
.tile.on { background: #2e2e2e; color: #fff; }
.tile svg + .mag { margin-left: -7px; }
.control-right .tile { width: 24px; height: 24px; }

/* Workspace */
.workspace { flex: 1; min-height: 0; display: flex; }
.strip { flex: none; height: 12px; background: #434343; border-bottom: 1px solid #3a3a3a; line-height: 8px; padding-left: 4px; font-size: 13px; color: #b0b0b0; }
.strip.end { text-align: right; padding-right: 6px; }

.tools { flex: none; width: 72px; border-right: 3px solid #3c3c3c; }
.tools-grip { display: block; width: 20px; height: 5px; margin: 4px 0 0 24px; background: repeating-linear-gradient(90deg, #333 0 1px, #535353 1px 2px); }
.tool-grid { display: grid; grid-template-columns: 28px 28px; gap: 2px 2px; padding: 11px 5px 4px; border-bottom: 1px solid #4a4a4a; }
.tool { position: relative; height: 22px; border-radius: 2px; display: grid; place-items: center; }
.tool svg { width: 20px; height: 18px; fill: #c4c4c4; }
.tool.on { background: #2e2e2e; }
.tool.more::after { content: ""; position: absolute; right: 0; bottom: 0; border: 2px solid; border-color: transparent #ccc #ccc transparent; }
.fill-stroke { margin: 3px 0 4px 4px; }
.mode-row { display: flex; margin: 0 0 5px 4px; width: 58px; border: 1px solid #474747; }
.mode-row button { flex: 1; height: 18px; display: grid; place-items: center; border-right: 1px solid #474747; }
.mode-row .on { background: #2e2e2e; }
.mode-row i { width: 12px; height: 12px; border: 1px solid #000; }
.dot-white { background: #fff; }
.dot-grad { background: linear-gradient(90deg, #eee, #222); }
.dot-none { background: linear-gradient(135deg, #fff 40%, #e01010 40% 60%, #fff 60%); }
.screen-mode { margin: 7px 0 20px 23px; }
.dots { margin-left: 27px; }

.document { flex: 1; min-width: 0; display: flex; flex-direction: column; }
.doc-tabs { flex: none; height: 29px; background: #434343; border-bottom: 1px solid #3a3a3a; display: flex; }
.doc-tab { display: flex; align-items: center; gap: 9px; padding: 0 14px 2px 7px; background: #535353; border-right: 1px solid #3a3a3a; color: #f0f0f0; font-weight: 700; }
.doc-tab button { font-size: 14px; }
.canvas-row { flex: 1; min-height: 0; display: flex; background: #4a4a4a; }
.canvas { flex: 1; background: #606060; display: flex; }
.artboard { position: relative; flex: 1; margin-left: 293px; background: #fff; border-left: 1px solid #000; }
/* the palette sits freely on the artboard */
.palette { position: absolute; left: 139px; top: 352px; width: 970px; height: 380px; display: grid; grid-template-columns: repeat(3, 1fr); border-right: 1px solid #7cc4d8; }
.color-card { display: flex; flex-direction: column; align-items: center; justify-content: flex-end; padding-bottom: 23px; font-family: Inter, "Liberation Sans", sans-serif; }
.color-card strong { margin: 44px 0 14px; font-size: 32px; line-height: 48px; font-weight: 600; }
.color-card span { font-size: 12px; line-height: 16px; font-weight: 500; opacity: .6; }
.navy { background: #020024; color: #fff; align-items: flex-start; padding-left: 184px; }
.pink { background: #ea246c; color: #fff; }
.gold { background: #ebbf7c; color: #000; }
.vscroll { flex: none; width: 16px; display: flex; flex-direction: column; align-items: center; justify-content: space-between; padding: 5px 0; color: #aaa; }
.flip { transform: rotate(180deg); }
.thumb { width: 14px; height: 26px; border-radius: 7px; background: #666; margin-top: -96px; }
.statusbar { flex: none; height: 16px; background: #4a4a4a; display: flex; align-items: center; padding-left: 4px; color: #d0d0d0; }
.status-select { flex: none; width: 67px; height: 15px; margin-right: 7px; padding-left: 3px; }
.status-select.artboard-no { width: 60px; margin: 0 9px; }
.status-tool { margin: 2px 0 0 88px; }
.hscroll { flex: 1; display: flex; align-items: center; justify-content: space-between; padding: 0 22px 0 591px; color: #aaa; }
.hthumb { width: 26px; height: 15px; border-radius: 7px; background: #666; }

/* Panels */
.dock { flex: none; border-left: 2px solid #3c3c3c; display: flex; flex-direction: column; }
.dock-a { width: 243px; }
.dock-b { width: 253px; }
.tabs { height: 27px; display: flex; background: #434343; }
.tabs button { display: flex; align-items: center; gap: 5px; padding: 0 9px 2px; color: #a8a8a8; font-weight: 700; border-right: 1px solid #3a3a3a; border-bottom: 1px solid #3a3a3a; }
.tabs button.active { background: #535353; color: #fff; border-bottom-color: #535353; padding: 0 8px 2px 6px; }
.tabs .first.active { padding-left: 4px; }
.panel-menu { margin: 10px 7px 0 auto; }
.dock-b .tabs button.active { padding: 0 9px 2px; }
.panel { border-bottom: 1px solid #3a3a3a; }
.panel + .panel { margin-top: 2px; border-top: 1px solid #3a3a3a; }

.transform-fields { display: flex; margin: 0 6px 0 5px; padding: 6px 0 6px; border-bottom: 2px solid #4a4a4a; }
.ref-point { margin-top: 14px; }
.xywh { display: grid; grid-template-columns: 22px 67px 12px 67px; gap: 5px 4px; align-items: center; color: #999; }
.xywh label { display: flex; align-items: center; justify-content: flex-end; gap: 1px; }
.xywh input, .xywh select { width: 67px; height: 21px; padding-left: 5px; background-color: #575757; color: #6e6e6e; border-radius: 3px; opacity: 1; }
.xywh select { width: 62px; background-size: 10px 6px, 0 0; background-position: right 6px center; opacity: .5; color: #8a8a8a; }
.unlink { margin: 14px 0 0 9px; }
.empty { text-align: center; color: #808080; padding: 64px 0 65px; line-height: 16px; }
.scale-opts { display: flex; flex-direction: column; gap: 6px; margin: 0 6px 0 5px; padding: 4px 0 5px; border-top: 2px solid #4a4a4a; }
.scale-opts label, .checks label { display: flex; align-items: center; height: 14px; gap: 5px; }
.dim { color: #7e7e7e; }
input[type="checkbox"] { appearance: none; width: 12px; height: 12px; border: 1px solid #bdbdbd; border-radius: 2px; }
.dim input[type="checkbox"] { border-color: #7e7e7e; }

.character-body { padding: 6px 5px 10px; display: grid; gap: 5px; }
.combo { height: 21px; border: 1px solid #666; border-radius: 2px; padding-left: 6px; background-color: #454545; }
.font-family { display: flex; align-items: center; height: 21px; border: 1px solid #666; border-radius: 2px; background: #454545; }
.font-family .combo { border: 0; height: 19px; }
.metrics { display: grid; grid-template-columns: 18px 87px 30px 87px; gap: 5px 3px; align-items: center; }
.m-icon { justify-self: end; }
.glyph-head { display: flex; align-items: center; height: 24px; }
.glyph-head span:first-child { flex: 1; }
.ag-mini { margin-right: 20px; color: #c4c4c4; font-size: 13px; line-height: 13px; }
.ag-mini b { font-weight: 400; border: 1px solid #c4c4c4; }
.glyph-row { display: flex; justify-content: space-between; align-items: center; }
.glyph-row .tile { width: 24px; height: 24px; font-size: 14px; }
.base { text-decoration: underline; }
.strike { text-decoration: line-through; }
.glyph-row .strike { text-decoration-thickness: 1px; }
.boxed b { font-weight: 400; border: 1px solid #fff; line-height: 16px; }
.anchor::after { content: ""; position: absolute; top: 4px; left: 11px; width: 4px; height: 4px; border: 1px solid #fff; background: #2e2e2e; }

.color { padding-bottom: 6px; }
.color-body { display: flex; padding: 7px 15px 0 5px; }
.sliders { flex: 1; display: grid; grid-template-columns: 10px 1fr 36px; gap: 12px 8px; align-items: center; margin-left: 13px; }
.sliders input:not(.slide), #hex, #inc { height: 21px; padding-left: 4px; border: 1px solid #666; border-radius: 2px; background: #454545; color: #f0f0f0; width: 100%; }
.slide { appearance: none; width: calc(100% + 4px); height: 20px; min-width: 0; }
.slide::-webkit-slider-runnable-track { height: 4px; background: linear-gradient(90deg, var(--c), #fff) no-repeat 0 0 / calc(100% - 4px) 100%; }
.slide::-webkit-slider-thumb { appearance: none; width: 9px; height: 8px; margin-top: 4px; background: #c4c4c4; clip-path: polygon(50% 0, 100% 50%, 100% 100%, 0 100%, 0 50%); }
.cyan { --c: #00ffff; }
.magenta { --c: #ff00ff; }
.yel { --c: #ffff00; }
.hex-row { display: flex; align-items: center; padding: 16px 8px 6px 5px; }
.hex-row label { margin: 0 5px 0 auto; }
.hex-row #hex { width: 66px; padding-left: 5px; }
.spectrum {
    height: 190px;
    margin: 0 9px 0 6px;
    border: 1px solid #333;
    background:
        linear-gradient(#fff 0%, rgba(255,255,255,.55) 20%, rgba(255,255,255,0) 46%, rgba(0,0,0,0) 50%, rgba(0,0,0,.55) 74%, #000 96%),
        linear-gradient(90deg, #f00 2%, #ff0 18%, #0f0 31%, #0f0 35%, #0ff 51%, #00f 67%, #f0f 83%, #f00 100%);
}

.prop-body { padding: 9px 13px 0 0; height: 502px; display: flex; flex-direction: column; }
.prop-body > * { flex: none; }
.prop-body h2, .sel, .icon-row, .kbd-inc, .checks, .quick-actions { padding-left: 10px; }
.sel { line-height: 16px; padding-bottom: 7px; }
.prop-body h2 { line-height: 16px; padding-top: 8px; }
.doc-fields { display: grid; grid-template-columns: 79px 116px; gap: 8px 6px; align-items: center; padding: 9px 0 12px; }
.doc-fields label { text-align: right; }
.doc-fields #units { height: 21px; border: 1px solid #666; border-radius: 2px; padding-left: 5px; background-color: #454545; background-size: 10px 6px, 0 0; }
.doc-fields .btn { grid-column: 2; }
.ab-pick { display: flex; align-items: center; height: 21px; }
.ab-pick .combo { flex: none; width: 74px; padding-left: 3px; }
.ab-pick svg { margin-left: 13px; }
.icon-row { display: flex; align-items: center; height: 36px; gap: 8px; }
.icon-row span { width: 78px; }
.kbd-inc { display: flex; align-items: center; gap: 6px; padding-top: 7px; }
.kbd-inc #inc { width: 60px; }
.prop-body .checks { display: grid; gap: 10px; padding: 12px 0 14px 13px; }
.prop-body .quick { padding: 14px 0 8px 10px; }
.quick-actions { display: flex; gap: 9px; }
.quick-actions .btn { width: 117px; }
.quick-actions .btn + .btn { width: 101px; }

.artboards { flex: 1; display: flex; flex-direction: column; min-height: 0; }
.artboards .tabs { flex: none; }
.artboard-list { flex: 1; margin: 6px 6px 0 5px; border: 1px solid #626262; border-radius: 2px; }
.artboard-list li { display: flex; align-items: center; height: 19px; background: #4f657e; color: #e6e6e6; }
.artboard-list .num { width: 40px; padding-left: 6px; border-right: 1px solid #48617a; color: #fff; font-size: 13px; }
.artboard-list .name { flex: 1; padding-left: 6px; }
.artboard-list svg { margin-right: 19px; }
.artboard-tools { display: flex; align-items: center; height: 20px; gap: 14px; padding: 0 28px 0 11px; }
.rearrange { margin-right: auto; }

/* View menu */
.view-menu {
    position: absolute;
    left: 425px;
    top: 25px;
    width: 263px;
    padding: 5px 0 0;
    border-radius: 6px;
    overflow: hidden;
    isolation: isolate;
    background: linear-gradient(#b8b2ae 0, #bcb6b2 60px, #cdc8c4 95px, #e3deda 115px, #efeae6 135px, #efeae6 calc(100% - 25px), #e4e0dc 100%);
    box-shadow: 0 0 1px rgba(0,0,0,.6), 0 6px 20px rgba(0,0,0,.25);
    color: #1d1a1b;
    font-family: Inter, "Liberation Sans", sans-serif;
    font-size: 13px;
}
/* frosted tint of the navy card under the menu */
.view-menu::before {
    content: "";
    position: absolute;
    z-index: -1;
    left: 110px;
    right: -80px;
    top: 450px;
    height: 380px;
    background: #9d95aa;
    filter: blur(22px);
}
.view-menu ul { font-size: 13px; }
.view-menu ul + ul { position: relative; margin-top: 11px; }
.view-menu ul + ul::before { content: ""; position: absolute; left: 14px; right: 14px; top: -6px; height: 1px; background: rgba(0,0,0,.15); }
.view-menu li { position: relative; display: flex; align-items: center; height: 22px; padding: 0 12px 0 23px; }
.view-menu li button { flex: 1; text-align: left; white-space: nowrap; }
.view-menu button:disabled { color: rgba(0,0,0,.3); }
.view-menu kbd { font: inherit; color: rgba(0,0,0,.3); display: flex; }
.view-menu kbd i { font-style: normal; width: 17px; text-align: center; }
.view-menu .sub { margin-right: 4px; }
.check { position: absolute; left: 9px; top: 6px; }
.menu-more { display: flex; justify-content: center; padding: 4px 0 9px; }
```
